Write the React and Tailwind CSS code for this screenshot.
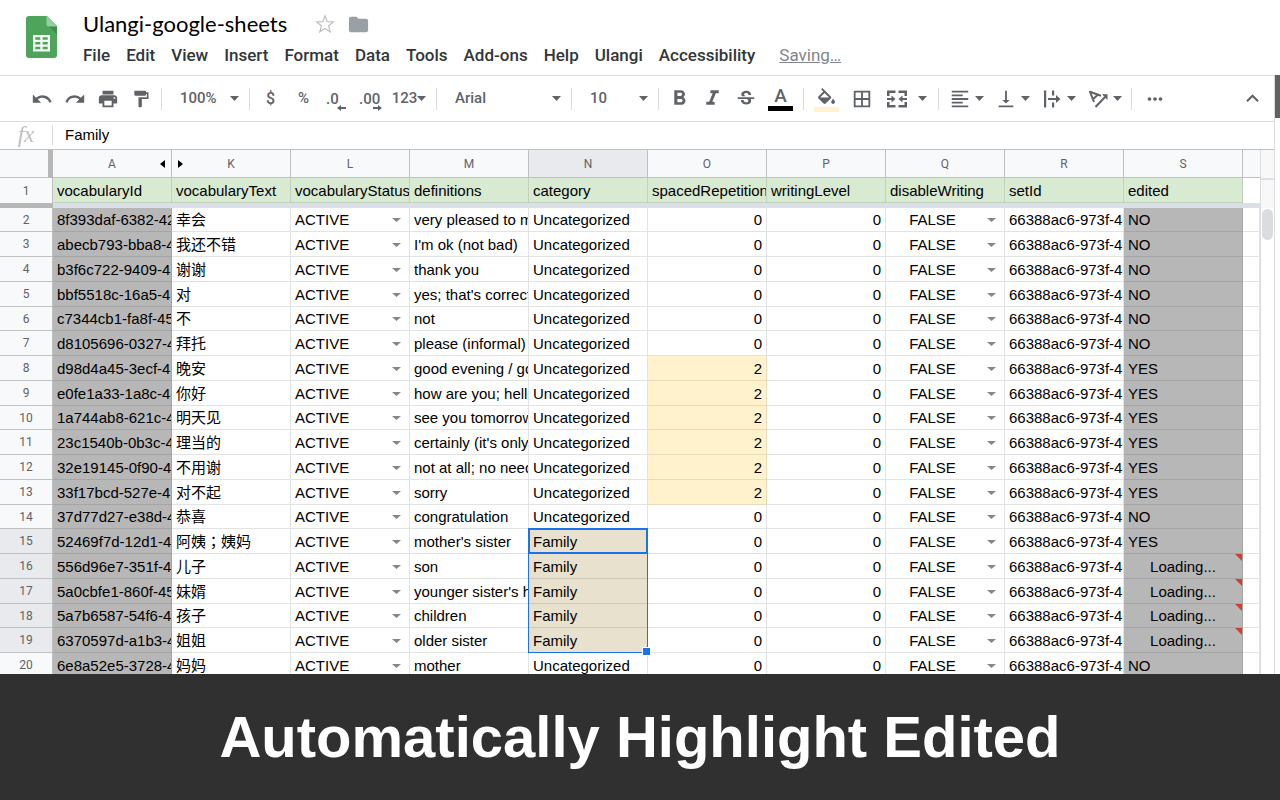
import React from "react";
import {
  MdUndo,
  MdRedo,
  MdPrint,
  MdFormatPaint,
  MdFormatBold,
  MdFormatItalic,
  MdStrikethroughS,
  MdBorderAll,
  MdFormatAlignLeft,
  MdVerticalAlignBottom,
  MdMoreHoriz,
  MdKeyboardArrowUp,
  MdFolder,
} from "react-icons/md";

const MENUS = [
  "File",
  "Edit",
  "View",
  "Insert",
  "Format",
  "Data",
  "Tools",
  "Add-ons",
  "Help",
  "Ulangi",
  "Accessibility",
];

const COLUMNS = [
  { letter: "A", field: "vocabularyId" },
  { letter: "K", field: "vocabularyText" },
  { letter: "L", field: "vocabularyStatus" },
  { letter: "M", field: "definitions" },
  { letter: "N", field: "category" },
  { letter: "O", field: "spacedRepetition" },
  { letter: "P", field: "writingLevel" },
  { letter: "Q", field: "disableWriting" },
  { letter: "R", field: "setId" },
  { letter: "S", field: "edited" },
];

const U = "Uncategorized";
const F = "Family";

// row number, id, text, definition, category, spaced repetition level, edited
const ROWS = [
  [2, "8f393daf-6382-4257", "幸会", "very pleased to meet", U, 0, "NO"],
  [3, "abecb793-bba8-4c1e", "我还不错", "I'm ok (not bad)", U, 0, "NO"],
  [4, "b3f6c722-9409-4a52", "谢谢", "thank you", U, 0, "NO"],
  [5, "bbf5518c-16a5-4d0e", "对", "yes; that's correct", U, 0, "NO"],
  [6, "c7344cb1-fa8f-45b1", "不", "not", U, 0, "NO"],
  [7, "d8105696-0327-4f6a", "拜托", "please (informal)", U, 0, "NO"],
  [8, "d98d4a45-3ecf-4b21", "晚安", "good evening / good night", U, 2, "YES"],
  [9, "e0fe1a33-1a8c-4e90", "你好", "how are you; hello", U, 2, "YES"],
  [10, "1a744ab8-621c-4c3d", "明天见", "see you tomorrow", U, 2, "YES"],
  [11, "23c1540b-0b3c-4a77", "理当的", "certainly (it's only right)", U, 2, "YES"],
  [12, "32e19145-0f90-4d18", "不用谢", "not at all; no need", U, 2, "YES"],
  [13, "33f17bcd-527e-4b60", "对不起", "sorry", U, 2, "YES"],
  [14, "37d77d27-e38d-4c05", "恭喜", "congratulation", U, 0, "NO"],
  [15, "52469f7d-12d1-4e3b", "阿姨；姨妈", "mother's sister", F, 0, "YES"],
  [16, "556d96e7-351f-4a9c", "儿子", "son", F, 0, "Loading..."],
  [17, "5a0cbfe1-860f-4528", "妹婿", "younger sister's husband", F, 0, "Loading..."],
  [18, "5a7b6587-54f6-4d71", "孩子", "children", F, 0, "Loading..."],
  [19, "6370597d-a1b3-4c88", "姐姐", "older sister", F, 0, "Loading..."],
  [20, "6e8a52e5-3728-4f13", "妈妈", "mother", U, 0, "NO"],
];

function Caret({ className = "h-[5px] w-[9px]" }) {
  return (
    <svg
      viewBox="0 0 10 5"
      preserveAspectRatio="none"
      className={`shrink-0 ${className}`}
      aria-hidden="true"
    >
      <path d="M0 0h10L5 5z" fill="currentColor" />
    </svg>
  );
}

function Divider() {
  return <div className="mx-1 h-[22px] w-px shrink-0 bg-[#dadce0]" />;
}

function Tool({ label, className = "w-[33px] justify-center", children }) {
  return (
    <button
      type="button"
      aria-label={label}
      className={`flex h-8 shrink-0 items-center text-[22px] ${className}`}
    >
      {children}
    </button>
  );
}

function ToolSelect({ label, value, className }) {
  return (
    <label className={`relative flex h-8 shrink-0 items-center ${className}`}>
      <select
        aria-label={label}
        defaultValue={value}
        className="h-full w-full appearance-none bg-transparent pl-[14px] text-[15px] font-medium outline-none"
      >
        <option>{value}</option>
      </select>
      <Caret className="pointer-events-none absolute right-[6px] h-[5px] w-[9px]" />
    </label>
  );
}

function SheetsLogo() {
  return (
    <svg viewBox="0 0 31 42" className="h-[42px] w-[31px] shrink-0" aria-hidden="true">
      <path d="M3 0h18l10 10v29a3 3 0 0 1-3 3H3a3 3 0 0 1-3-3V3a3 3 0 0 1 3-3z" fill="#4fa45c" />
      <path d="M22 9.500 31 18.500V10z" fill="#3f8c4d" />
      <path d="M20.500 0 31 10.500h-8a2.500 2.500 0 0 1-2.500-2.500z" fill="#92d0a6" />
      <path
        d="M7 19h17v16.500H7zM9.300 21.300v2.400h5v-2.400zm7.400 0v2.400h5v-2.400zM9.300 26v2.400h5V26zm7.400 0v2.400h5V26zM9.300 30.800v2.400h5v-2.400zm7.400 0v2.400h5v-2.400z"
        fill="#f4f8f4"
        fillRule="evenodd"
      />
    </svg>
  );
}

function Header() {
  return (
    <header className="flex h-[75px] shrink-0 pl-[26px]">
      <div className="pt-4">
        <SheetsLogo />
      </div>
      <div className="flex flex-col pl-[26px] pt-[10px]">
        <div className="flex h-7 items-center">
          <h1 className="font-['Lato',sans-serif] text-[22px] leading-7 text-black">Ulangi-google-sheets</h1>
          <button type="button" aria-label="Star" className="ml-7 text-[#c0c0c0]">
            <svg viewBox="0 0 20 20" className="h-5 w-5" fill="none" stroke="currentColor" strokeWidth="1.2">
              <path d="M10 1.800 12.200 7.600 18.400 7.900 13.600 11.800 15.200 17.800 10 14.400 4.800 17.800 6.400 11.800 1.600 7.900 7.800 7.600z" />
            </svg>
          </button>
          <button type="button" aria-label="Move to folder" className="ml-3 text-[23px] text-[#9aa0a6]">
            <MdFolder />
          </button>
        </div>
        <nav className="flex h-9 items-center gap-4 text-[17px] font-medium text-[#333639]">
          {MENUS.map((name) => (
            <button key={name} type="button">
              {name}
            </button>
          ))}
          <a href="#saving" className="ml-2 font-normal text-[#80868b] underline">
            Saving…
          </a>
        </nav>
      </div>
    </header>
  );
}

function Decimal({ digits, direction }) {
  const left = direction === "left";
  return (
    <span className="relative text-[15px] font-medium leading-5">
      {digits}
      <svg
        viewBox="0 0 10 6"
        className={`absolute top-4 h-[6px] w-[10px] ${left ? "-right-2" : "-right-0.5"}`}
        aria-hidden="true"
      >
        <path d={left ? "M0 3 4 0v2h5v2H4v2z" : "M10 3 6 0v2H1v2h5v2z"} fill="currentColor" />
      </svg>
    </span>
  );
}

function Toolbar() {
  return (
    <div
      role="toolbar"
      className="flex h-[46px] shrink-0 items-center border-t border-[#dadce0] pl-[25px] pr-[5px] text-[#5f6368]"
    >
      <Tool label="Undo"><MdUndo /></Tool>
      <Tool label="Redo"><MdRedo /></Tool>
      <Tool label="Print"><MdPrint /></Tool>
      <Tool label="Paint format"><MdFormatPaint className="text-[20px]" /></Tool>
      <Divider />
      <ToolSelect label="Zoom" value="100%" className="w-[79px]" />
      <Divider />
      <Tool label="Format as currency"><span className="text-[16px] font-medium">$</span></Tool>
      <Tool label="Format as percent"><span className="text-[15px] font-medium">%</span></Tool>
      <Tool label="Decrease decimal places" className="w-[33px] pl-[6px]">
        <Decimal digits=".0" direction="left" />
      </Tool>
      <Tool label="Increase decimal places" className="w-[33px] pl-[6px]">
        <Decimal digits=".00" direction="right" />
      </Tool>
      <Tool label="More formats" className="w-[46px] justify-center">
        <span className="text-[15px] font-medium">123</span>
        <Caret />
      </Tool>
      <Divider />
      <ToolSelect label="Font" value="Arial" className="w-[126px]" />
      <Divider />
      <ToolSelect label="Font size" value="10" className="w-[78px]" />
      <Divider />
      <Tool label="Bold"><MdFormatBold className="text-[25px]" /></Tool>
      <Tool label="Italic"><MdFormatItalic className="text-[25px]" /></Tool>
      <Tool label="Strikethrough"><MdStrikethroughS /></Tool>
      <Tool label="Text color" className="w-[37px] flex-col justify-center">
        <span className="text-[19px] font-medium leading-5">A</span>
        <span className="h-[5px] w-[25px] bg-black" />
      </Tool>
      <Divider />
      <Tool label="Fill color" className="w-9 flex-col justify-end pb-[3px]">
        <svg viewBox="3 0 18 17" className="h-4 w-[17px]" fill="currentColor" aria-hidden="true">
          <path d="M16.560 8.940 7.620 0 6.210 1.410l2.380 2.380-5.150 5.150c-.59.59-.59 1.540 0 2.120l5.500 5.500c.29.29.68.44 1.060.44s.77-.15 1.060-.44l5.500-5.500c.59-.58.59-1.530 0-2.120zM5.210 10 10 5.210 14.790 10zM19 11.500s-2 2.170-2 3.500c0 1.100.9 2 2 2s2-.9 2-2c0-1.330-2-3.500-2-3.500z" />
        </svg>
        <span className="mt-[3px] h-[5px] w-[25px] bg-[#fff2cc]" />
      </Tool>
      <Tool label="Borders" className="w-[35px] justify-center"><MdBorderAll /></Tool>
      <Tool label="Merge cells" className="w-[55px] justify-center gap-[11px]">
        <svg viewBox="0 0 20 18" className="h-[18px] w-5" fill="currentColor" aria-hidden="true">
          <path d="M0 .5h8.500v2.500H2.500v3H0zM11.500 .5H20V6h-2.500V3h-6zM0 12h2.500v3h6v2.500H0zM17.500 12H20v5.500h-8.500V15h6zM0 8h4.500V5.500L8.500 9l-4 3.500V10H0zM20 8h-4.500V5.500L11.500 9l4 3.500V10H20z" />
        </svg>
        <Caret />
      </Tool>
      <Divider />
      <Tool label="Horizontal align" className="w-[46px] justify-center gap-1"><MdFormatAlignLeft /><Caret /></Tool>
      <Tool label="Vertical align" className="w-[46px] justify-center gap-1"><MdVerticalAlignBottom /><Caret /></Tool>
      <Tool label="Text wrapping" className="w-[46px] justify-center gap-1">
        <svg viewBox="0 0 22 22" className="h-[22px] w-[22px]" fill="currentColor" aria-hidden="true">
          <path d="M3 2.500h2.200v17H3zM11 2.500h2.200v5H11zM11 14.500h2.200v5H11zM7 9.900h8V7l4.500 4-4.500 4v-2.900H7z" />
        </svg>
        <Caret />
      </Tool>
      <Tool label="Text rotation" className="w-[46px] justify-center gap-1">
        <svg viewBox="0 0 22 22" className="h-[22px] w-[22px]" aria-hidden="true">
          <path
            d="M7 14 3 3.800 14 7.800M6.200 11 10.800 6.700M8.500 19 18 9"
            fill="none"
            stroke="currentColor"
            strokeWidth="2"
            strokeLinejoin="round"
          />
          <path d="M20.500 6.300v5.700l-5.600-5.700z" fill="currentColor" />
        </svg>
        <Caret />
      </Tool>
      <Divider />
      <Tool label="More" className="w-[37px] justify-center"><MdMoreHoriz /></Tool>
      <Tool label="Hide menus" className="ml-auto w-[33px] justify-center">
        <MdKeyboardArrowUp className="text-[25px]" />
      </Tool>
    </div>
  );
}

function FormulaBar() {
  return (
    <div className="flex h-7 shrink-0 items-center border-t border-[#dadce0] pb-[2px]">
      <span className="w-[52px] text-center font-['Liberation_Serif',serif] text-[23px] italic leading-6 text-[#bdc1c6]">
        fx
      </span>
      <div className="h-5 w-px bg-[#dadce0]" />
      <input
        aria-label="Formula"
        defaultValue="Family"
        className="h-6 min-w-0 flex-1 bg-transparent pl-3 font-['Liberation_Sans',sans-serif] text-[15px] text-black outline-none"
      />
    </div>
  );
}

const LINE = "border-b border-r border-[#e2e3e3]";
const GREY = "border-b border-r border-[#a5a5a5] bg-[#b7b7b7]";

function CellSelect({ label, value, centered }) {
  return (
    <div className="relative flex items-center">
      <select
        aria-label={label}
        defaultValue={value}
        className={`h-[22px] w-full appearance-none bg-transparent outline-none ${
          centered ? "pr-[25px] [text-align-last:center]" : ""
        }`}
      >
        <option>{value}</option>
      </select>
      <Caret className="pointer-events-none absolute right-1 h-1 w-[9px] text-[#868686]" />
    </div>
  );
}

function Selection() {
  return (
    <div className="pointer-events-none absolute -left-px -top-px z-10 h-[125px] w-[120px] border border-[#1a73e8]">
      <div className="-m-px h-[26px] border-2 border-[#1a73e8]" />
      <div className="absolute -bottom-1 -right-1 h-[9px] w-[9px] border border-white bg-[#1a73e8]" />
    </div>
  );
}

function Row({ data }) {
  const [number, id, text, definition, category, level, edited] = data;
  const selected = category === F;
  const loading = edited.startsWith("Loading");
  const cell = "overflow-hidden px-1 pt-px leading-[22px]";
  return (
    <tr className="h-[25px] [&:nth-child(4n+1)]:h-6">
      <th
        scope="row"
        className={`border-b border-r border-[#c0c0c0] font-['Roboto',sans-serif] text-[12px] font-normal leading-[22px] text-[#5f6368] ${
          selected ? "bg-[#e8eaed]" : "bg-[#f8f9fa]"
        }`}
      >
        {number}
      </th>
      <td className={`${cell} ${GREY}`}>{id}</td>
      <td
        className={`${cell} ${LINE} ${
          text.includes("；") ? "font-['Liberation_Sans','Noto_Sans_CJK_TC',sans-serif]" : ""
        }`}
      >
        {text}
      </td>
      <td className={`${cell} ${LINE}`}>
        <CellSelect label={`Status of row ${number}`} value="ACTIVE" />
      </td>
      <td className={`${cell} ${LINE}`}>{definition}</td>
      {selected ? (
        <td className="relative border-b border-r border-[#cfc9b8] bg-[#e8e1cd] px-1 pt-px leading-[22px]">
          {category}
          {number === 15 && <Selection />}
        </td>
      ) : (
        <td className={`${cell} ${LINE}`}>{category}</td>
      )}
      <td
        className={`${cell} text-right ${
          level > 0 ? "border-b border-r border-[#e8dcba] bg-[#fff2cc]" : LINE
        }`}
      >
        {level}
      </td>
      <td className={`${cell} ${LINE} text-right`}>0</td>
      <td className={`${cell} ${LINE}`}>
        <CellSelect label={`Disable writing in row ${number}`} value="FALSE" centered />
      </td>
      <td className={`${cell} ${LINE}`}>66388ac6-973f-4e21</td>
      <td className={`${cell} ${GREY} relative ${loading ? "text-center" : ""}`}>
        {edited}
        {loading && (
          <svg viewBox="0 0 7 7" className="absolute right-0 top-0 h-[7px] w-[7px]" aria-hidden="true">
            <path d="M0 0h7v7z" fill="#d23f31" />
          </svg>
        )}
      </td>
      <td className={LINE} />
    </tr>
  );
}

function Sheet() {
  return (
    <div className="flex min-h-0 flex-1 overflow-hidden border-t border-[#c0c0c0]">
      <div className="min-w-0 flex-1 overflow-hidden">
        <table className="w-full table-fixed border-separate border-spacing-0 whitespace-nowrap font-['Liberation_Sans','Noto_Sans_CJK_SC',sans-serif] text-[15px] text-black">
          <colgroup>
            <col className="w-[53px]" />
            {COLUMNS.map((c) => (
              <col key={c.letter} className="w-[119px]" />
            ))}
            <col />
          </colgroup>
          <thead>
            <tr className="h-7">
              <th className="border-b border-r-[5px] border-b-[#c0c0c0] border-r-[#b7b7b7] bg-[#f8f9fa]" />
              {COLUMNS.map(({ letter }) => (
                <th
                  key={letter}
                  scope="col"
                  className={`relative border-b border-r border-[#c0c0c0] font-['Roboto',sans-serif] text-[12px] font-normal leading-6 text-[#5f6368] ${
                    letter === "N" ? "bg-[#e8eaed]" : "bg-[#f8f9fa]"
                  }`}
                >
                  {letter}
                  {letter === "A" && (
                    <svg viewBox="0 0 5 8" className="absolute right-[6px] top-[10px] h-2 w-[5px]" aria-hidden="true">
                      <path d="M5 0v8L0 4z" fill="#000" />
                    </svg>
                  )}
                  {letter === "K" && (
                    <svg viewBox="0 0 5 8" className="absolute left-[6px] top-[10px] h-2 w-[5px]" aria-hidden="true">
                      <path d="M0 0v8l5-4z" fill="#000" />
                    </svg>
                  )}
                </th>
              ))}
              <th className="border-b border-[#c0c0c0] bg-[#f8f9fa]" />
            </tr>
            <tr className="h-[25px]">
              <th
                scope="row"
                className="border-r border-[#c0c0c0] bg-[#f8f9fa] font-['Roboto',sans-serif] text-[12px] font-normal leading-6 text-[#5f6368]"
              >
                1
              </th>
              {COLUMNS.map(({ field }) => (
                <td
                  key={field}
                  className="overflow-hidden border-b border-r border-[#c1d2bc] bg-[#d9ead3] px-1 pt-[2px] leading-[22px]"
                >
                  {field}
                </td>
              ))}
              <td />
            </tr>
            <tr className="h-[5px]">
              <td className="bg-[#b7b7b7]" />
              <td colSpan={11} className="bg-[#dadfe8]" />
            </tr>
          </thead>
          <tbody>
            {ROWS.map((row) => (
              <Row key={row[0]} data={row} />
            ))}
          </tbody>
        </table>
      </div>
      <div className="flex w-[14px] shrink-0 flex-col border-l border-[#dadce0]">
        <div className="h-7 bg-[#f8f8f8]" />
        <div className="h-[2px] bg-[#dadfe8]" />
        <div className="h-7 bg-[#f8f8f8]" />
        <div className="mx-px mt-px h-[31px] rounded-full bg-[#dadce0]" />
      </div>
    </div>
  );
}

export default function App() {
  return (
    <div className="flex h-screen flex-col overflow-hidden bg-white font-['Roboto',sans-serif]">
      <Header />
      <main className="flex min-h-0 flex-1">
        <div className="flex min-w-0 flex-1 flex-col border-r border-[#dadce0]">
          <Toolbar />
          <FormulaBar />
          <Sheet />
        </div>
        <div className="w-[5px] shrink-0">
          <div className="h-[43px] bg-[#616161]" />
        </div>
      </main>
      <footer className="shrink-0 bg-[#303030] py-8 text-center font-['Liberation_Sans',sans-serif] text-[58px] font-bold leading-[62px] text-white">
        Automatically Highlight Edited
      </footer>
    </div>
  );
}
